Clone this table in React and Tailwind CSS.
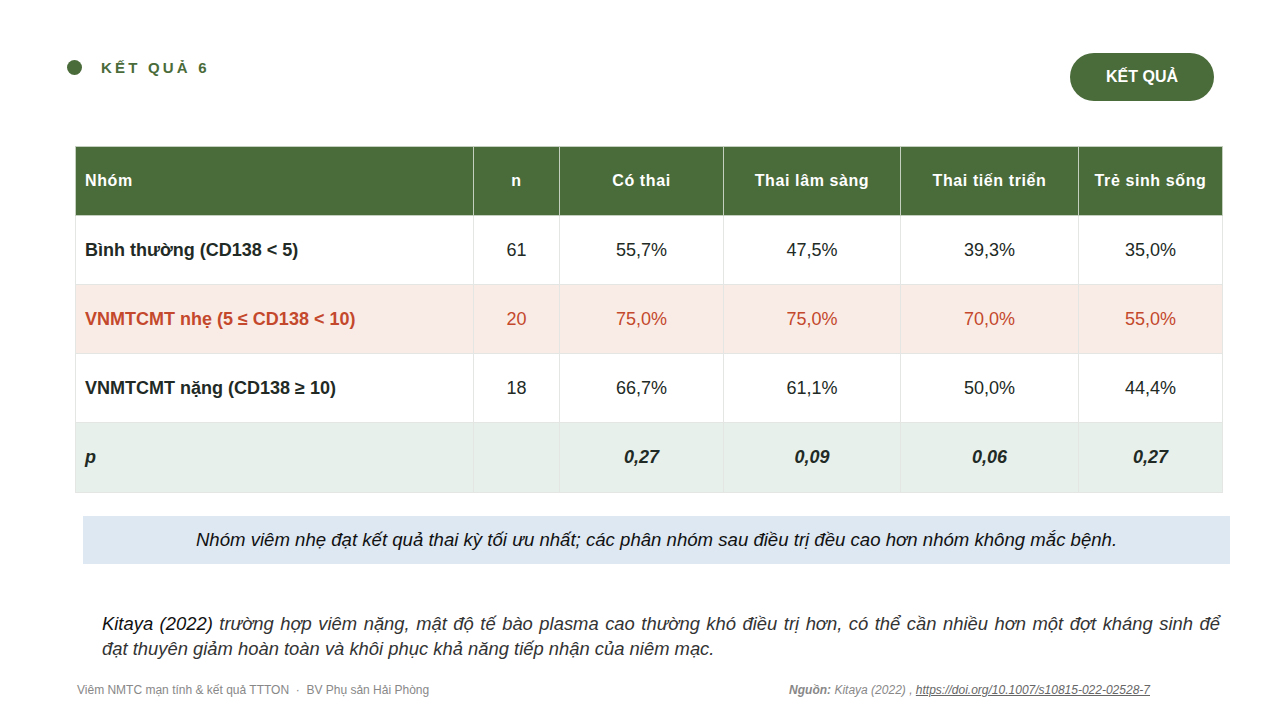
import React from "react";

const rows = [
  { label: "Bình thường (CD138 < 5)", n: "61", v: ["55,7%", "47,5%", "39,3%", "35,0%"], kind: "normal" },
  { label: "VNMTCMT nhẹ (5 ≤ CD138 < 10)", n: "20", v: ["75,0%", "75,0%", "70,0%", "55,0%"], kind: "red" },
  { label: "VNMTCMT nặng (CD138 ≥ 10)", n: "18", v: ["66,7%", "61,1%", "50,0%", "44,4%"], kind: "normal" },
];

export default function App() {
  return (
    <div className="w-[1280px] h-[720px] bg-white relative overflow-hidden" style={{ fontFamily: '"Liberation Sans", Arial, sans-serif' }}>
      <div className="flex items-start justify-between pl-[67px] pr-[66px] pt-[53px]">
        <div className="flex items-center gap-[19px] pt-[7px]">
          <div className="w-[15px] h-[15px] rounded-full bg-[#4a6b3a]" />
          <div className="text-[15px] font-bold tracking-[3.2px] text-[#4a6b3a] leading-none">KẾT QUẢ 6</div>
        </div>
        <div className="w-[144px] h-[48px] rounded-full bg-[#4a6b3a] text-white font-bold text-[16px] flex items-center justify-center">KẾT QUẢ</div>
      </div>

      <div className="pl-[75px] mt-[45px]">
        <table className="border-collapse table-fixed w-[1147px] text-[18px]">
          <colgroup>
            <col className="w-[398px]" />
            <col className="w-[86px]" />
            <col className="w-[164px]" />
            <col className="w-[177px]" />
            <col className="w-[178px]" />
            <col className="w-[144px]" />
          </colgroup>
          <thead>
            <tr className="h-[69px] bg-[#4a6b3a] text-white text-[16px] font-bold tracking-[0.6px]">
              <th className="text-left pl-[9px] border border-[#c5cfc0]">Nhóm</th>
              <th className="text-center border border-[#c5cfc0]">n</th>
              <th className="text-center border border-[#c5cfc0]">Có thai</th>
              <th className="text-center border border-[#c5cfc0]">Thai lâm sàng</th>
              <th className="text-center border border-[#c5cfc0]">Thai tiến triển</th>
              <th className="text-center border border-[#c5cfc0]">Trẻ sinh sống</th>
            </tr>
          </thead>
          <tbody>
            {rows.map((r) => {
              const red = r.kind === "red";
              return (
                <tr key={r.label} className={`h-[69px] ${red ? "bg-[#f9ece7] text-[#c4482c]" : "bg-white text-[#222a25]"}`}>
                  <td className="pl-[9px] font-bold border border-[#e4e6e4]">{r.label}</td>
                  <td className="text-center border border-[#e4e6e4]">{r.n}</td>
                  {r.v.map((x, i) => (
                    <td key={i} className="text-center border border-[#e4e6e4]">{x}</td>
                  ))}
                </tr>
              );
            })}
            <tr className="h-[70px] bg-[#e8f0ec] text-[#222a25] font-bold italic">
              <td className="pl-[9px] border border-[#e4e6e4]">p</td>
              <td className="border border-[#e4e6e4]"></td>
              <td className="text-center border border-[#e4e6e4]">0,27</td>
              <td className="text-center border border-[#e4e6e4]">0,09</td>
              <td className="text-center border border-[#e4e6e4]">0,06</td>
              <td className="text-center border border-[#e4e6e4]">0,27</td>
            </tr>
          </tbody>
        </table>
      </div>

      <div className="ml-[83px] mt-[23px] w-[1147px] h-[48px] bg-[#dde8f3] flex items-center justify-center text-[18.6px] italic text-[#111]">
        Nhóm viêm nhẹ đạt kết quả thai kỳ tối ưu nhất; các phân nhóm sau điều trị đều cao hơn nhóm không mắc bệnh.
      </div>

      <div className="ml-[102px] mt-[47px] w-[1118px] text-[18.4px] italic leading-[25px] text-[#333]">
        <span className="block text-justify [text-align-last:justify]">
          <span className="text-[#111]">Kitaya (2022)</span> trường hợp viêm nặng, mật độ tế bào plasma cao thường khó điều trị hơn, có thể cần nhiều hơn một đợt kháng sinh để
        </span>
        <span className="block">đạt thuyên giảm hoàn toàn và khôi phục khả năng tiếp nhận của niêm mạc.</span>
      </div>

      <div className="absolute left-[77px] right-[129px] top-[681px] flex justify-between text-[12px] text-[#888]">
        <div>Viêm NMTC mạn tính &amp; kết quả TTTON &nbsp;·&nbsp; BV Phụ sản Hải Phòng</div>
        <div className="italic text-[12px] pr-[1px]">
          <span className="font-bold">Nguồn:</span> Kitaya (2022) , <span className="underline text-[#666]">https://doi.org/10.1007/s10815-022-02528-7</span>
        </div>
      </div>
    </div>
  );
}
